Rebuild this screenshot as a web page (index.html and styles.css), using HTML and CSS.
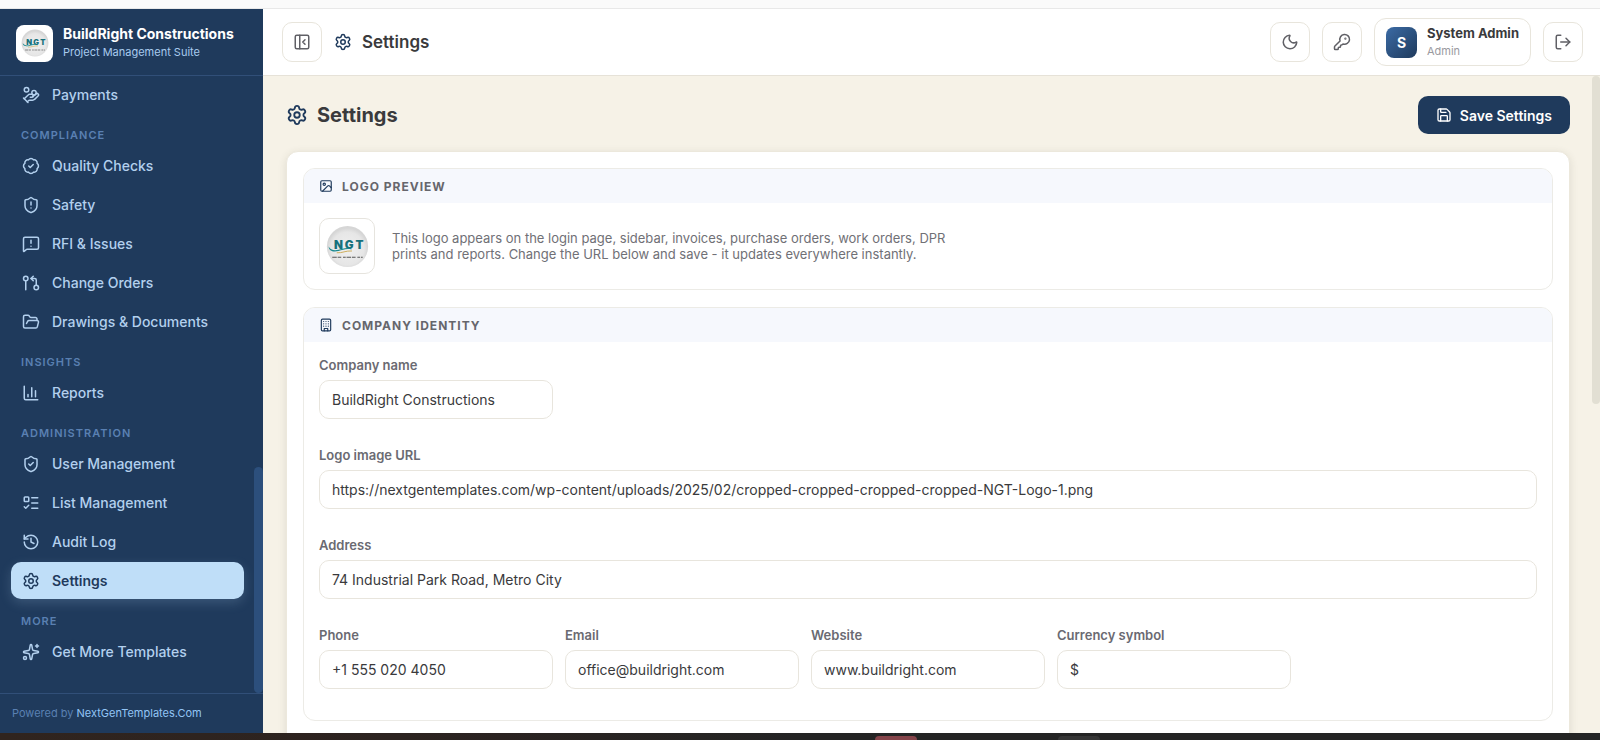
FILE: index.html
```html
<!DOCTYPE html>
<html lang="en">
<head>
<meta charset="utf-8">
<meta name="viewport" content="width=device-width, initial-scale=1">
<title>Settings - BuildRight Constructions</title>
<link rel="stylesheet" href="styles.css">
</head>
<body>
<svg class="sprite" aria-hidden="true">
  <defs>
    <radialGradient id="disc" cx="50%" cy="55%" r="50%">
      <stop offset="0" stop-color="#f0f0f0"/>
      <stop offset="0.8" stop-color="#e6e6e6"/>
      <stop offset="1" stop-color="#d6d6d6"/>
    </radialGradient>
  </defs>
  <symbol id="i-gear" viewBox="0 0 24 24"><path d="M9.671 4.136a2.34 2.34 0 0 1 4.659 0 2.34 2.34 0 0 0 3.319 1.915 2.34 2.34 0 0 1 2.33 4.033 2.34 2.34 0 0 0 0 3.831 2.34 2.34 0 0 1-2.33 4.033 2.34 2.34 0 0 0-3.319 1.915 2.34 2.34 0 0 1-4.659 0 2.34 2.34 0 0 0-3.32-1.915 2.34 2.34 0 0 1-2.33-4.033 2.34 2.34 0 0 0 0-3.831A2.34 2.34 0 0 1 6.35 6.051a2.34 2.34 0 0 0 3.319-1.915"/><circle cx="12" cy="12" r="3"/></symbol>
</svg>

<div class="strip-top"></div>

<div class="app">
  <aside class="sidebar">
    <div class="brand">
      <span class="brand-logo"><svg class="logo-sm" viewBox="0 0 48 48" role="img" aria-label="NGT logo">
        <circle cx="24" cy="24" r="23" fill="url(#disc)"/>
        <text class="logo-text"><tspan x="9" y="27">N</tspan><tspan x="21" y="27">G</tspan><tspan x="33" y="27">T</tspan></text>
        <path d="M3 24c0 5 5 6.500 11 5 5-1.200 9-3 15-1.500-5-3.500-10-1-15 .2-5 1.200-9 .3-11-3.700z" fill="#1b8a8f"/>
        <path d="M12 31c6 .5 10-2.500 17-2" stroke="#c9a64b" stroke-width="1" fill="none"/>
        <path d="M7 36h34" stroke="#444" stroke-width="1" stroke-dasharray="5 1 4 2 3 1"/>
      </svg></span>
      <div class="brand-text">
        <div class="brand-name">BuildRight Constructions</div>
        <div class="brand-sub">Project Management Suite</div>
      </div>
    </div>

    <nav class="nav">
      <a class="nav-item" href="#"><svg class="icon" viewBox="0 0 24 24"><path d="M11 15h2a2 2 0 1 0 0-4h-3c-.6 0-1.100.2-1.400.6L3 17"/><path d="m7 21 1.600-1.400c.3-.4.8-.6 1.400-.6h4c1.100 0 2.100-.4 2.800-1.200l4.600-4.400a2 2 0 0 0-2.750-2.910l-4.200 3.900"/><path d="m2 16 6 6"/><circle cx="16" cy="9" r="2.900"/><circle cx="6" cy="5" r="3"/></svg>Payments</a>

      <div class="nav-heading">Compliance</div>
      <a class="nav-item" href="#"><svg class="icon" viewBox="0 0 24 24"><path d="M3.850 8.620a4 4 0 0 1 4.780-4.770 4 4 0 0 1 6.740 0 4 4 0 0 1 4.780 4.780 4 4 0 0 1 0 6.740 4 4 0 0 1-4.770 4.780 4 4 0 0 1-6.750 0 4 4 0 0 1-4.780-4.770 4 4 0 0 1 0-6.760Z"/><path d="m9 12 2 2 4-4"/></svg>Quality Checks</a>
      <a class="nav-item" href="#"><svg class="icon" viewBox="0 0 24 24"><path d="M20 13c0 5-3.500 7.500-7.660 8.950a1 1 0 0 1-.67-.01C7.500 20.500 4 18 4 13V6a1 1 0 0 1 1-1c2 0 4.500-1.200 6.240-2.720a1.170 1.170 0 0 1 1.520 0C14.510 3.810 17 5 19 5a1 1 0 0 1 1 1z"/><path d="M12 8v4M12 16h.01"/></svg>Safety</a>
      <a class="nav-item" href="#"><svg class="icon" viewBox="0 0 24 24"><path d="M22 17a2 2 0 0 1-2 2H6.828a2 2 0 0 0-1.414.586l-2.202 2.202A.71.71 0 0 1 2 21.286V5a2 2 0 0 1 2-2h16a2 2 0 0 1 2 2z"/><path d="M12 15h.01M12 7v4"/></svg>RFI &amp; Issues</a>
      <a class="nav-item" href="#"><svg class="icon" viewBox="0 0 24 24"><circle cx="5" cy="6" r="3"/><path d="M5 9v12"/><circle cx="19" cy="18" r="3"/><path d="m15 9-3-3 3-3"/><path d="M12 6h5a2 2 0 0 1 2 2v7"/></svg>Change Orders</a>
      <a class="nav-item" href="#"><svg class="icon" viewBox="0 0 24 24"><path d="m6 14 1.500-2.900A2 2 0 0 1 9.240 10H20a2 2 0 0 1 1.940 2.500l-1.540 6a2 2 0 0 1-1.950 1.500H4a2 2 0 0 1-2-2V5a2 2 0 0 1 2-2h3.900a2 2 0 0 1 1.690.9l.81 1.200a2 2 0 0 0 1.670.9H18a2 2 0 0 1 2 2v2"/></svg>Drawings &amp; Documents</a>

      <div class="nav-heading">Insights</div>
      <a class="nav-item" href="#"><svg class="icon" viewBox="0 0 24 24"><path d="M3 3v16a2 2 0 0 0 2 2h16"/><path d="M18 17V9M13 17V5M8 17v-3"/></svg>Reports</a>

      <div class="nav-heading">Administration</div>
      <a class="nav-item" href="#"><svg class="icon" viewBox="0 0 24 24"><path d="M20 13c0 5-3.500 7.500-7.660 8.950a1 1 0 0 1-.67-.01C7.500 20.500 4 18 4 13V6a1 1 0 0 1 1-1c2 0 4.500-1.200 6.240-2.720a1.170 1.170 0 0 1 1.520 0C14.510 3.810 17 5 19 5a1 1 0 0 1 1 1z"/><path d="m9 12 2 2 4-4"/></svg>User Management</a>
      <a class="nav-item" href="#"><svg class="icon" viewBox="0 0 24 24"><rect x="3" y="4" width="6" height="6" rx="1"/><path d="m3 17 2 2 4-4"/><path d="M13 5h8M13 12h8M13 19h8"/></svg>List Management</a>
      <a class="nav-item" href="#"><svg class="icon" viewBox="0 0 24 24"><path d="M3 12a9 9 0 1 0 9-9 9.750 9.750 0 0 0-6.740 2.740L3 8"/><path d="M3 3v5h5"/><path d="M12 7v5l4 2"/></svg>Audit Log</a>
      <a class="nav-item active" href="#" aria-current="page"><svg class="icon"><use href="#i-gear"/></svg>Settings</a>

      <div class="nav-heading">More</div>
      <a class="nav-item" href="#"><svg class="icon" viewBox="0 0 24 24"><path d="M11.017 2.814a1 1 0 0 1 1.966 0l1.051 5.558a2 2 0 0 0 1.594 1.594l5.558 1.051a1 1 0 0 1 0 1.966l-5.558 1.051a2 2 0 0 0-1.594 1.594l-1.051 5.558a1 1 0 0 1-1.966 0l-1.051-5.558a2 2 0 0 0-1.594-1.594l-5.558-1.051a1 1 0 0 1 0-1.966l5.558-1.051a2 2 0 0 0 1.594-1.594z"/><path d="M20 2v4M22 4h-4"/><circle cx="4" cy="20" r="2"/></svg>Get More Templates</a>
      <span class="nav-thumb"></span>
    </nav>

    <div class="sidebar-foot">Powered by <a class="foot-link" href="#">NextGenTemplates.Com</a></div>
  </aside>

  <div class="content">
    <header class="topbar">
      <button class="icon-btn" type="button" aria-label="Collapse sidebar"><svg class="icon" viewBox="0 0 24 24"><rect x="3" y="3" width="18" height="18" rx="2"/><path d="M9 3v18"/><path d="m16 15-3-3 3-3"/></svg></button>
      <div class="topbar-title"><svg class="icon navy"><use href="#i-gear"/></svg>Settings</div>
      <div class="topbar-actions">
        <button class="icon-btn" type="button" aria-label="Dark mode"><svg class="icon" viewBox="0 0 24 24"><path d="M20.985 12.486a9 9 0 1 1-9.473-9.472c.405-.022.617.46.402.803a6 6 0 0 0 8.268 8.268c.344-.215.825-.004.803.401"/></svg></button>
        <button class="icon-btn" type="button" aria-label="Change password"><svg class="icon" viewBox="0 0 24 24"><path d="M2.586 17.414A2 2 0 0 0 2 18.828V21a1 1 0 0 0 1 1h3a1 1 0 0 0 1-1v-1a1 1 0 0 1 1-1h1a1 1 0 0 0 1-1v-1a1 1 0 0 1 1-1h.172a2 2 0 0 0 1.414-.586l.814-.814a6.500 6.500 0 1 0-4-4z"/><circle cx="16.500" cy="7.500" r=".5" fill="currentColor"/></svg></button>
        <div class="user">
          <span class="avatar">S</span>
          <div>
            <div class="user-name">System Admin</div>
            <div class="user-role">Admin</div>
          </div>
        </div>
        <button class="icon-btn" type="button" aria-label="Log out"><svg class="icon" viewBox="0 0 24 24"><path d="m16 17 5-5-5-5"/><path d="M21 12H9"/><path d="M9 21H5a2 2 0 0 1-2-2V5a2 2 0 0 1 2-2h4"/></svg></button>
      </div>
    </header>

    <main class="main">
      <div class="page-head">
        <h1 class="page-title"><svg class="icon icon-lg navy"><use href="#i-gear"/></svg>Settings</h1>
        <button class="save-btn" type="submit" form="settings"><svg class="icon icon-md" viewBox="0 0 24 24"><path d="M15.200 3a2 2 0 0 1 1.400.6l3.800 3.800a2 2 0 0 1 .6 1.400V19a2 2 0 0 1-2 2H5a2 2 0 0 1-2-2V5a2 2 0 0 1 2-2z"/><path d="M17 21v-7a1 1 0 0 0-1-1H8a1 1 0 0 0-1 1v7"/><path d="M7 3v4a1 1 0 0 0 1 1h7"/></svg>Save Settings</button>
      </div>

      <form class="card" id="settings">
        <section class="panel">
          <h2 class="panel-head"><svg class="icon icon-sm navy" viewBox="0 0 24 24"><rect x="3" y="3" width="18" height="18" rx="2"/><circle cx="9" cy="9" r="2"/><path d="m21 15-3.086-3.086a2 2 0 0 0-2.828 0L6 21"/></svg>Logo preview</h2>
          <div class="preview">
            <span class="preview-logo"><svg class="logo-lg" viewBox="0 0 48 48" role="img" aria-label="NGT logo">
              <circle cx="24" cy="24" r="23" fill="url(#disc)"/>
              <text class="logo-text"><tspan x="9" y="27">N</tspan><tspan x="21" y="27">G</tspan><tspan x="33" y="27">T</tspan></text>
              <path d="M3 24c0 5 5 6.500 11 5 5-1.200 9-3 15-1.500-5-3.500-10-1-15 .2-5 1.200-9 .3-11-3.700z" fill="#1b8a8f"/>
              <path d="M12 31c6 .5 10-2.500 17-2" stroke="#c9a64b" stroke-width="1" fill="none"/>
              <path d="M7 36h34" stroke="#444" stroke-width="1" stroke-dasharray="5 1 4 2 3 1"/>
            </svg></span>
            <p class="preview-text">This logo appears on the login page, sidebar, invoices, purchase orders, work orders, DPR prints and reports. Change the URL below and save - it updates everywhere instantly.</p>
          </div>
        </section>

        <section class="panel">
          <h2 class="panel-head"><svg class="icon icon-sm navy" viewBox="0 0 24 24"><rect x="4" y="2" width="16" height="20" rx="2"/><path d="M9 22v-4h6v4M8 6h.01M16 6h.01M12 6h.01M12 10h.01M12 14h.01M16 10h.01M16 14h.01M8 10h.01M8 14h.01"/></svg>Company identity</h2>
          <div class="fields">
            <div class="field">
              <label for="name">Company name</label>
              <input id="name" type="text" value="BuildRight Constructions">
            </div>
            <div class="field wide">
              <label for="logo">Logo image URL</label>
              <input id="logo" type="text" value="https://nextgentemplates.com/wp-content/uploads/2025/02/cropped-cropped-cropped-cropped-NGT-Logo-1.png">
            </div>
            <div class="field wide">
              <label for="address">Address</label>
              <input id="address" type="text" value="74 Industrial Park Road, Metro City">
            </div>
            <div class="field">
              <label for="phone">Phone</label>
              <input id="phone" type="text" value="+1 555 020 4050">
            </div>
            <div class="field">
              <label for="email">Email</label>
              <input id="email" type="text" value="office@buildright.com">
            </div>
            <div class="field">
              <label for="website">Website</label>
              <input id="website" type="text" value="www.buildright.com">
            </div>
            <div class="field">
              <label for="currency">Currency symbol</label>
              <input id="currency" type="text" value="$">
            </div>
          </div>
        </section>
      </form>
      <span class="main-thumb"></span>
    </main>
  </div>
</div>

<div class="strip-bottom">
  <span class="tab tab-red"></span>
  <span class="tab tab-grey"></span>
</div>
</body>
</html>
```

FILE: styles.css
```css
*, *::before, *::after { box-sizing: border-box; }

body {
  margin: 0;
  height: 100vh;
  display: flex;
  flex-direction: column;
  overflow: hidden;
  font-family: Inter, "Liberation Sans", sans-serif;
  font-size: 14px;
  color: #3a3a3c;
  background: #fff;
}

.sprite { position: absolute; width: 0; height: 0; }
.logo-text { font-family: Inter, sans-serif; font-size: 13px; font-weight: 900; fill: #17717c; }

.icon {
  width: 18px;
  height: 18px;
  flex: none;
  fill: none;
  stroke: currentColor;
  stroke-width: 2;
  stroke-linecap: round;
  stroke-linejoin: round;
}
.icon-sm { width: 14px; height: 14px; }
.icon-md { width: 16px; height: 16px; }
.icon-lg { width: 22px; height: 22px; }
.navy { color: #1f3a5c; }

.strip-top {
  flex: none;
  height: 9px;
  background: #fafafa;
  border-bottom: 1px solid #e8e8e8;
}
.strip-bottom {
  flex: none;
  position: relative;
  height: 7px;
  background: linear-gradient(90deg, #30241e 0, #2c2320 25%, #242424 50%, #242424 100%);
}
.tab {
  position: absolute;
  bottom: 0;
  height: 4px;
  border-radius: 4px 4px 0 0;
}
.tab-red { left: 875px; width: 42px; background: #85444a; }
.tab-grey { left: 1058px; width: 42px; background: #363636; }

.app { flex: 1; min-height: 0; display: flex; }

/* Sidebar */
.sidebar {
  flex: none;
  width: 263px;
  display: flex;
  flex-direction: column;
  background: #1f3a5c;
  color: #bcdcf8;
}
.brand {
  flex: none;
  height: 67px;
  display: flex;
  align-items: center;
  gap: 10px;
  padding: 2px 16px 0;
  border-bottom: 1px solid #314f78;
}
.brand-logo {
  width: 37px;
  height: 37px;
  display: grid;
  place-items: center;
  background: #fff;
  border-radius: 8px;
}
.logo-sm { width: 28px; height: 28px; }
.logo-lg { width: 43px; height: 43px; }
.brand-name { font-size: 14px; line-height: 18px; font-weight: 700; color: #fff; }
.brand-sub { font-size: 11px; line-height: 18px; color: #a8cbee; }

.nav {
  flex: 1;
  min-height: 0;
  position: relative;
  overflow: hidden;
  display: flex;
  flex-direction: column;
  padding: 0 19px 0 11px;
}
.nav-item {
  flex: none;
  display: flex;
  align-items: center;
  gap: 12px;
  height: 37px;
  margin-bottom: 2px;
  padding: 0 11px;
  border-radius: 10px;
  font-weight: 500;
  color: #b3d0ee;
  text-decoration: none;
}
.nav-item.active {
  background: #bfdef8;
  color: #1f3a5c;
  font-weight: 600;
  box-shadow: 0 4px 12px rgba(191, 222, 248, 0.18);
}
.nav-heading {
  flex: none;
  margin: 14px 0 5px 10px;
  font-size: 11px;
  line-height: 13px;
  font-weight: 600;
  letter-spacing: 1px;
  text-transform: uppercase;
  color: #5a80b2;
}
.nav-thumb {
  position: absolute;
  right: 0;
  bottom: 0;
  width: 9px;
  height: 226px;
  border-radius: 5px;
  background: #2c4f7c;
}
.sidebar-foot {
  flex: none;
  padding: 10px 12px;
  border-top: 1px solid #314f78;
  font-size: 11px;
  line-height: 19px;
  color: #5a80b2;
}
.foot-link { color: #93c5f5; text-decoration: none; }

/* Top bar */
.content { flex: 1; min-width: 0; display: flex; flex-direction: column; }
.topbar {
  flex: none;
  height: 67px;
  display: flex;
  align-items: center;
  gap: 12px;
  padding: 0 17px 0 19px;
  background: #fff;
  border-bottom: 1px solid #e6e2d8;
}
.icon-btn {
  width: 40px;
  height: 40px;
  display: grid;
  place-items: center;
  padding: 0;
  border: 1px solid #e8e5dc;
  border-radius: 10px;
  background: #fff;
  color: #606066;
}
.topbar-title {
  display: flex;
  align-items: center;
  gap: 10px;
  font-size: 17px;
  font-weight: 600;
}
.topbar-actions { margin-left: auto; display: flex; align-items: center; gap: 12px; }
.user {
  display: flex;
  align-items: center;
  gap: 10px;
  height: 48px;
  padding: 0 11px;
  border: 1px solid #e8e5dc;
  border-radius: 12px;
}
.avatar {
  width: 31px;
  height: 31px;
  display: grid;
  place-items: center;
  border-radius: 8px;
  background: linear-gradient(135deg, #3b6ba5, #1f3a5c);
  color: #fff;
  font-weight: 700;
}
.user-name { font-size: 13px; line-height: 18px; font-weight: 700; }
.user-role { font-size: 11px; line-height: 18px; color: #9a9a9f; }

/* Page */
.main {
  flex: 1;
  min-height: 0;
  position: relative;
  overflow: hidden;
  padding: 20px 30px 0 23px;
  background: #f6f2e7;
}
.main-thumb {
  position: absolute;
  top: 0;
  right: 0;
  width: 8px;
  height: 328px;
  border-radius: 4px;
  background: #e2dfd3;
}
.page-head {
  display: flex;
  align-items: center;
  justify-content: space-between;
  margin-bottom: 17px;
}
.page-title {
  display: flex;
  align-items: center;
  gap: 9px;
  margin: 0;
  font-size: 20px;
  font-weight: 700;
}
.save-btn {
  display: flex;
  align-items: center;
  gap: 8px;
  height: 38px;
  padding: 0 18px;
  border: 0;
  border-radius: 10px;
  background: #1f3a5c;
  color: #fff;
  font: 600 14px Inter, sans-serif;
}
.card {
  display: flex;
  flex-direction: column;
  gap: 17px;
  padding: 16px 16px 48px;
  background: #fff;
  border: 1px solid #ece8dc;
  border-radius: 12px;
  box-shadow: 0 2px 8px rgba(60, 60, 40, 0.12);
}
.panel {
  border: 1px solid #ecebe6;
  border-radius: 12px;
  overflow: hidden;
}
.panel-head {
  display: flex;
  align-items: center;
  gap: 9px;
  height: 34px;
  margin: 0;
  padding: 0 15px;
  background: #f6f8fd;
  color: #66666c;
  font-size: 12px;
  font-weight: 700;
  letter-spacing: 1px;
  text-transform: uppercase;
}
.preview {
  display: flex;
  align-items: center;
  gap: 17px;
  padding: 15px;
}
.preview-logo {
  flex: none;
  width: 56px;
  height: 56px;
  display: grid;
  place-items: center;
  border: 1px solid #e6e4de;
  border-radius: 10px;
}
.preview-text {
  margin: 0;
  max-width: 570px;
  font-size: 13px;
  line-height: 16px;
  color: #707076;
}
.fields {
  display: grid;
  grid-template-columns: repeat(5, 1fr);
  gap: 28px 12px;
  padding: 15px 15px 31px;
}
.field { display: flex; flex-direction: column; gap: 6px; }
.field.wide { grid-column: 1 / -1; }
.field:first-child { grid-column: 1 / 2; }
.field label {
  font-size: 13px;
  line-height: 17px;
  font-weight: 600;
  color: #6a6a72;
}
.field input {
  width: 100%;
  height: 39px;
  padding: 0 12px;
  border: 1px solid #e8e5dd;
  border-radius: 10px;
  background: #fff;
  color: #3a3a3c;
  font: 400 14px Inter, sans-serif;
}
```
